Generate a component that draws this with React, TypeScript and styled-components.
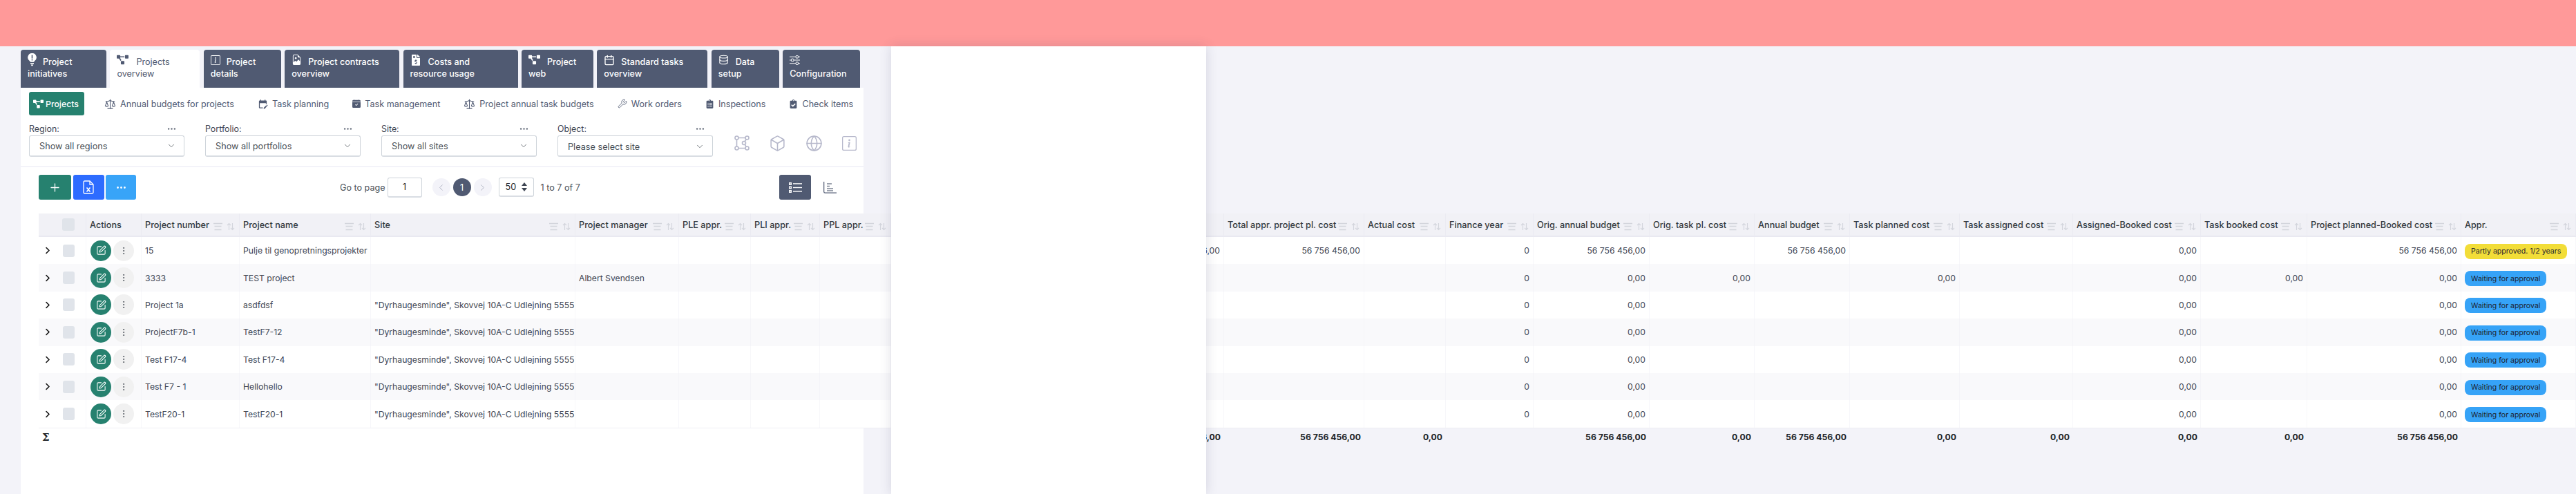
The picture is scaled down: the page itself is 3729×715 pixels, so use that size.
import styled, { createGlobalStyle } from "styled-components";
import { ReactNode } from "react";
import {
  Box,
  Calendar,
  ChevronDown,
  ChevronLeft,
  ChevronRight,
  Database,
  Ellipsis,
  EllipsisVertical,
  Globe,
  Plus,
  Scale,
  SquarePen,
  Wrench,
} from "lucide-react";
import { BsCalendarCheckFill, BsFileEarmarkImage, BsInfoSquare, BsSliders } from "react-icons/bs";
import { FaClipboardCheck, FaClipboardList, FaFileInvoiceDollar, FaProjectDiagram } from "react-icons/fa";
import { MdEditCalendar } from "react-icons/md";

const Bulb = () => (
  <svg width="13" height="19" viewBox="0 0 13 19">
    <path
      fill="currentColor"
      d="M6.5 0a6.2 6.2 0 0 0-3.6 11.3c.5.4.8.9.9 1.5h5.4c.1-.6.4-1.100.9-1.500A6.200 6.200 0 0 0 6.500 0zM4 14h5v1.400H4zM4.800 16.400h3.400l-.6 1.800H5.400z"
    />
    <rect x="5.700" y="2.600" width="1.600" height="5" fill="#505a72" />
    <rect x="5.700" y="8.800" width="1.600" height="1.700" fill="#505a72" />
  </svg>
);

const VectorSquare = () => (
  <svg width="22" height="22" viewBox="0 0 22 22" fill="none" stroke="currentColor" strokeWidth="1.6">
    <circle cx="3.500" cy="3.500" r="2.500" />
    <circle cx="18.500" cy="3.500" r="2.500" />
    <circle cx="3.500" cy="18.500" r="2.500" />
    <circle cx="18.500" cy="18.500" r="2.500" />
    <circle cx="14" cy="11" r="2.500" />
    <path d="M6 3.500h10M3.500 6v10M6 18.500h10M17.300 5.800l-2.300 3M15.200 13.200l2 3.200" />
  </svg>
);

const ExcelFile = () => (
  <svg width="16" height="20" viewBox="0 0 16 20" fill="none" stroke="#fff" strokeWidth="1.300">
    <path d="M2.500 1h7.500l5 5v11.500a1.500 1.500 0 0 1-1.500 1.500h-11A1.500 1.500 0 0 1 1 17.500v-15A1.500 1.500 0 0 1 2.500 1z" />
    <path d="M10 1v5h5" />
    <path d="M5.500 10.500l5 6M10.500 10.500l-5 6" strokeWidth="1.600" />
  </svg>
);

const ListView = () => (
  <svg width="19" height="15" viewBox="0 0 19 15">
    <g fill="#fff">
      <rect x="0" y="0" width="4" height="4" />
      <rect x="0" y="5.500" width="4" height="4" />
      <rect x="0" y="11" width="4" height="4" />
      <rect x="6" y="1.200" width="13" height="1.400" />
      <rect x="6" y="6.800" width="13" height="1.400" />
      <rect x="6" y="12.300" width="13" height="1.400" />
    </g>
    <g fill="#505a72">
      <rect x="1.400" y="1.400" width="1.200" height="1.200" />
      <rect x="1.400" y="6.900" width="1.200" height="1.200" />
      <rect x="1.400" y="12.400" width="1.200" height="1.200" />
    </g>
  </svg>
);

const ChartView = () => (
  <svg width="19" height="17" viewBox="0 0 19 17" fill="none">
    <path d="M.700 0v14.500c0 1 .6 1.600 1.600 1.600H19" stroke="#505a72" strokeWidth="1.200" />
    <path d="M5 3h7M5 6.500h4M5 10h9M5 13h9" stroke="#7c8494" strokeWidth="1.300" />
  </svg>
);

const SortIcons = () => (
  <svg width="31" height="12" viewBox="0 0 31 12" fill="none" stroke="#d3d5dc" strokeWidth="1.100">
    <path d="M0 1.500h13M1.500 5.500h10M1.500 10.500h10" strokeWidth="1.300" />
    <path d="M22.500 11V1.500M20 4l2.500-2.500L25 4M27.500 1v9.500M25 8l2.500 2.500L30 8" />
  </svg>
);

const SpinArrows = () => (
  <svg width="8" height="13" viewBox="0 0 8 13" fill="#3e4553">
    <path d="M4 0l4 5H0zM4 13L0 8h8z" />
  </svg>
);

type TabDef = { w: number; gap: number; icon: ReactNode; first: string; second: string; active?: boolean };

const tabs: TabDef[] = [
  { w: 124, gap: 9, icon: <Bulb />, first: "Project", second: "initiatives" },
  { w: 130, gap: 11, icon: <FaProjectDiagram size={17} />, first: "Projects", second: "overview", active: true },
  { w: 112, gap: 9, icon: <BsInfoSquare size={14} />, first: "Project", second: "details" },
  { w: 166, gap: 9, icon: <BsFileEarmarkImage size={15} />, first: "Project contracts", second: "overview" },
  { w: 166, gap: 10, icon: <FaFileInvoiceDollar size={16} />, first: "Costs and", second: "resource usage" },
  { w: 104, gap: 10, icon: <FaProjectDiagram size={17} />, first: "Project", second: "web" },
  { w: 160, gap: 9, icon: <Calendar size={16} strokeWidth={2} />, first: "Standard tasks", second: "overview" },
  { w: 98, gap: 10, icon: <Database size={15} strokeWidth={1.8} />, first: "Data", second: "setup" },
  { w: 112, gap: 0, icon: <BsSliders size={15} />, first: "", second: "Configuration" },
];

const subTabs: { icon: ReactNode; label: string }[] = [
  { icon: <Scale size={17} strokeWidth={1.5} />, label: "Annual budgets for projects" },
  { icon: <MdEditCalendar size={15} />, label: "Task planning" },
  { icon: <BsCalendarCheckFill size={12} />, label: "Task management" },
  { icon: <Scale size={17} strokeWidth={1.5} />, label: "Project annual task budgets" },
  { icon: <Wrench size={14} strokeWidth={1.5} />, label: "Work orders" },
  { icon: <FaClipboardList size={13} />, label: "Inspections" },
  { icon: <FaClipboardCheck size={13} />, label: "Check items" },
];

const filters = [
  { label: "Region:", value: "Show all regions" },
  { label: "Portfolio:", value: "Show all portfolios" },
  { label: "Site:", value: "Show all sites" },
  { label: "Object:", value: "Please select site", low: true },
];

type Col = { key: string; label: string; w: number; right?: boolean };

const columns: Col[] = [
  { key: "num", label: "Project number", w: 142 },
  { key: "name", label: "Project name", w: 190 },
  { key: "site", label: "Site", w: 296 },
  { key: "manager", label: "Project manager", w: 150 },
  { key: "ple", label: "PLE appr.", w: 104 },
  { key: "pli", label: "PLI appr.", w: 100 },
  { key: "ppl", label: "PPL appr.", w: 103 },
  { key: "hidden", label: "", w: 482, right: true },
  { key: "total", label: "Total appr. project pl. cost", w: 203, right: true },
  { key: "actual", label: "Actual cost", w: 118, right: true },
  { key: "year", label: "Finance year", w: 127, right: true },
  { key: "orig", label: "Orig. annual budget", w: 168, right: true },
  { key: "origTask", label: "Orig. task pl. cost", w: 152, right: true },
  { key: "annual", label: "Annual budget", w: 138, right: true },
  { key: "planned", label: "Task planned cost", w: 159, right: true },
  { key: "assigned", label: "Task assigned cost", w: 164, right: true },
  { key: "assBooked", label: "Assigned-Booked cost", w: 185, right: true },
  { key: "booked", label: "Task booked cost", w: 154, right: true },
  { key: "projBooked", label: "Project planned-Booked cost", w: 223, right: true },
  { key: "appr", label: "Appr.", w: 166 },
];

const BIG = "56 756 456,00";
const SITE = '"Dyrhaugesminde", Skovvej 10A-C Udlejning 5555';
const base = { year: "0", orig: "0,00", assBooked: "0,00", projBooked: "0,00", appr: "Waiting for approval" };

const rows: Record<string, string>[] = [
  { num: "15", name: "Pulje til genopretningsprojekter", hidden: BIG, total: BIG, year: "0", orig: BIG, annual: BIG, assBooked: "0,00", projBooked: BIG, appr: "Partly approved. 1/2 years" },
  { ...base, num: "3333", name: "TEST project", manager: "Albert Svendsen", origTask: "0,00", planned: "0,00", booked: "0,00" },
  { ...base, num: "Project 1a", name: "asdfdsf", site: SITE },
  { ...base, num: "ProjectF7b-1", name: "TestF7-12", site: SITE },
  { ...base, num: "Test F17-4", name: "Test F17-4", site: SITE },
  { ...base, num: "Test F7 - 1", name: "Hellohello", site: SITE },
  { ...base, num: "TestF20-1", name: "TestF20-1", site: SITE },
];

const totals: Record<string, string> = {
  hidden: BIG,
  total: BIG,
  actual: "0,00",
  orig: BIG,
  origTask: "0,00",
  annual: BIG,
  planned: "0,00",
  assigned: "0,00",
  assBooked: "0,00",
  booked: "0,00",
  projBooked: BIG,
};

export default function App() {
  return (
    <Page>
      <GlobalStyle />
      <Banner />

      <TabBar>
        {tabs.map((t) => (
          <Tab key={t.second + t.first} $w={t.w} $active={t.active}>
            <TabLine $gap={t.gap}>
              {t.icon}
              {t.first}
            </TabLine>
            <TabLine $gap={0}>{t.second}</TabLine>
          </Tab>
        ))}
      </TabBar>

      <Card>
        <SubTabs>
          <SubTabActive>
            <FaProjectDiagram size={15} />
            Projects
          </SubTabActive>
          {subTabs.map((s) => (
            <SubTab key={s.label}>
              {s.icon}
              {s.label}
            </SubTab>
          ))}
        </SubTabs>

        <Filters>
          {filters.map((f) => (
            <Filter key={f.label}>
              <FilterLabel>
                {f.label}
                <Ellipsis size={15} color="#6b7280" />
              </FilterLabel>
              <Select $low={f.low}>
                {f.value}
                <ChevronDown size={14} strokeWidth={1.3} color="#495057" />
              </Select>
            </Filter>
          ))}
          <FilterIcons>
            <VectorSquare />
            <Box size={25} strokeWidth={1.5} />
            <Globe size={25} strokeWidth={1.5} />
            <BsInfoSquare size={21} />
          </FilterIcons>
        </Filters>

        <Toolbar>
          <Actions>
            <ActionButton $w={47} $bg="#26816f">
              <Plus size={19} strokeWidth={1.6} />
            </ActionButton>
            <ActionButton $w={45} $bg="#2d6cff">
              <ExcelFile />
            </ActionButton>
            <ActionButton $w={44} $bg="#38a4f8">
              <Ellipsis size={17} />
            </ActionButton>
          </Actions>

          <Pager>
            <span>Go to page</span>
            <PageInput>1</PageInput>
            <PageCircle>
              <ChevronLeft size={15} strokeWidth={1.2} />
            </PageCircle>
            <PageCircle $active>1</PageCircle>
            <PageCircle>
              <ChevronRight size={15} strokeWidth={1.2} />
            </PageCircle>
            <PageSize>
              50
              <SpinArrows />
            </PageSize>
            <span>1 to 7 of 7</span>
          </Pager>

          <ViewToggle>
            <ToggleButton>
              <ListView />
            </ToggleButton>
            <ChartView />
          </ViewToggle>
        </Toolbar>

        <Table>
          <colgroup>
            <TableCol $w={69} />
            <TableCol $w={80} />
            {columns.map((c) => (
              <TableCol key={c.key} $w={c.w} />
            ))}
          </colgroup>
          <thead>
            <tr>
              <Th>
                <SelectCell>
                  <Checkbox />
                </SelectCell>
              </Th>
              <Th>Actions</Th>
              {columns.map((c) => (
                <Th key={c.key}>
                  <HeadCell>
                    {c.label}
                    <SortIcons />
                  </HeadCell>
                </Th>
              ))}
            </tr>
          </thead>
          <tbody>
            {rows.map((r, i) => (
              <Row key={r.num} $striped={i % 2 === 1}>
                <Td>
                  <SelectCell>
                    <ChevronRight size={17} strokeWidth={2.4} color="#111" />
                    <Checkbox />
                  </SelectCell>
                </Td>
                <Td>
                  <RowActions>
                    <RoundButton $green>
                      <SquarePen size={15} strokeWidth={1.7} />
                    </RoundButton>
                    <RoundButton>
                      <EllipsisVertical size={14} strokeWidth={1.6} />
                    </RoundButton>
                  </RowActions>
                </Td>
                {columns.map((c) => (
                  <Td key={c.key} $right={c.right}>
                    {c.key === "appr" ? <Badge $partly={i === 0}>{r.appr}</Badge> : r[c.key]}
                  </Td>
                ))}
              </Row>
            ))}
          </tbody>
          <tfoot>
            <tr>
              <FootTd>
                <Sigma>Σ</Sigma>
              </FootTd>
              <FootTd />
              {columns.map((c) => (
                <FootTd key={c.key} $right>
                  {totals[c.key]}
                </FootTd>
              ))}
            </tr>
          </tfoot>
        </Table>
      </Card>

      <Drawer />
    </Page>
  );
}

const GlobalStyle = createGlobalStyle`
  html, body {
    margin: 0;
    padding: 0;
    background: #f3f3f9;
  }
  body {
    font-family: Inter, "Liberation Sans", sans-serif;
    overflow: hidden;
  }
`;

const Page = styled.div`
  position: relative;
  width: 3729px;
  height: 715px;
  overflow: hidden;
  background: #f3f3f9;
`;

const Banner = styled.div`
  height: 67px;
  background: #ff9999;
`;

const TabBar = styled.div`
  display: flex;
  gap: 5.4px;
  height: 55px;
  margin: 5px 0 0 30px;
`;

const Tab = styled.div<{ $w: number; $active?: boolean }>`
  box-sizing: border-box;
  width: ${(p) => p.$w}px;
  padding: 9px 10px 0;
  border-radius: 4px 4px 0 0;
  background: ${(p) => (p.$active ? "#fff" : "#505a72")};
  color: ${(p) => (p.$active ? "#505a72" : "#fff")};
  font-size: 12.6px;
  font-weight: ${(p) => (p.$active ? 400 : 500)};
`;

const TabLine = styled.div<{ $gap: number }>`
  display: flex;
  align-items: center;
  gap: ${(p) => p.$gap}px;
  height: 17px;
  white-space: nowrap;

  svg {
    margin-top: -6px;
    flex: none;
  }
`;

const Card = styled.div`
  width: 1220px;
  height: 588px;
  margin-left: 30px;
  background: #fff;
`;

const SubTabs = styled.div`
  display: flex;
  align-items: center;
  gap: 34px;
  height: 34px;
  padding: 6px 0 0 12px;
`;

const SubTabActive = styled.div`
  display: flex;
  align-items: center;
  gap: 3px;
  box-sizing: border-box;
  width: 80px;
  height: 34px;
  margin-right: -5px;
  padding-left: 6px;
  border-radius: 3px;
  background: #26816f;
  color: #fff;
  font-size: 12.3px;
  font-weight: 500;
`;

const SubTab = styled.div`
  display: flex;
  align-items: center;
  gap: 6px;
  color: #505a72;
  font-size: 12.6px;
  white-space: nowrap;
`;

const Filters = styled.div`
  display: flex;
  gap: 30px;
  padding: 10px 0 0 12px;
  height: 63px;
  box-sizing: content-box;
  border-bottom: 2px solid #f3f3f9;
`;

const Filter = styled.div`
  width: 225px;
`;

const FilterLabel = styled.div`
  display: flex;
  align-items: center;
  justify-content: space-between;
  height: 19px;
  padding-right: 11px;
  color: #3e4553;
  font-size: 12.4px;
`;

const Select = styled.div<{ $low?: boolean }>`
  display: flex;
  align-items: center;
  justify-content: space-between;
  box-sizing: border-box;
  height: 31px;
  padding: ${(p) => (p.$low ? "2px" : "0")} 11px 0 14px;
  border: 1px solid #ced4da;
  border-bottom: 2px solid #d9dde3;
  border-radius: 3px;
  color: #495057;
  font-size: 12.7px;
`;

const FilterIcons = styled.div`
  display: flex;
  align-items: center;
  gap: 28px;
  height: 26px;
  margin: 17px 0 0 1px;
  color: #b6b8cb;
`;

const Toolbar = styled.div`
  display: flex;
  align-items: center;
  height: 36px;
  padding: 11px 39px 0 26px;
`;

const Actions = styled.div`
  display: flex;
  gap: 2.500px;
`;

const ActionButton = styled.div<{ $w: number; $bg: string }>`
  display: flex;
  align-items: center;
  justify-content: center;
  width: ${(p) => p.$w}px;
  height: 36px;
  border-radius: 3px;
  background: ${(p) => p.$bg};
  color: #fff;
`;

const Pager = styled.div`
  display: flex;
  align-items: center;
  margin-left: 295px;
  color: #495057;
  font-size: 12.6px;
`;

const PageInput = styled.div`
  display: flex;
  align-items: center;
  justify-content: center;
  box-sizing: border-box;
  width: 50px;
  height: 29px;
  margin: 0 15px 0 3px;
  border: 1px solid #ced4da;
  border-bottom: 2px solid #d9dde3;
  border-radius: 3px;
  color: #212529;
`;

const PageCircle = styled.div<{ $active?: boolean }>`
  display: flex;
  align-items: center;
  justify-content: center;
  width: 26px;
  height: 26px;
  margin-right: 4px;
  border-radius: 50%;
  background: ${(p) => (p.$active ? "#505a72" : "#f3f3f9")};
  color: ${(p) => (p.$active ? "#fff" : "#9a9fb0")};
`;

const PageSize = styled.div`
  display: flex;
  align-items: center;
  justify-content: space-between;
  box-sizing: border-box;
  width: 51px;
  height: 28px;
  margin: 0 10px 0 6px;
  padding: 0 9px;
  border: 1px solid #ced4da;
  border-bottom: 2px solid #d9dde3;
  border-radius: 3px;
  color: #212529;
`;

const ViewToggle = styled.div`
  display: flex;
  align-items: center;
  gap: 18px;
  margin-left: auto;
`;

const ToggleButton = styled.div`
  display: flex;
  align-items: center;
  justify-content: center;
  width: 46px;
  height: 36px;
  border-radius: 3px;
  background: #505a72;
`;

const Table = styled.table`
  table-layout: fixed;
  width: 3673px;
  margin: 20px 0 0 26px;
  border-collapse: separate;
  border-spacing: 0;
  font-size: 12.2px;
  color: #3e4553;
`;

const TableCol = styled.col<{ $w: number }>`
  width: ${(p) => p.$w}px;
`;

const Th = styled.th`
  box-sizing: border-box;
  height: 34px;
  padding: 0 5px;
  border-right: 1px solid #ebebf2;
  border-bottom: 2px solid #e9e9f1;
  background: #f1f1f6;
  color: #343a40;
  font-weight: 500;
  font-size: 12.7px;
  text-align: left;
  white-space: nowrap;
`;

const HeadCell = styled.div`
  display: flex;
  align-items: center;
  justify-content: space-between;
  padding-right: 1px;

  svg {
    margin-top: 5px;
    flex: none;
  }
`;

const Row = styled.tr<{ $striped: boolean }>`
  background: ${(p) => (p.$striped ? "#f9f9fb" : "#fff")};
`;

const Td = styled.td<{ $right?: boolean }>`
  box-sizing: border-box;
  height: 39.4px;
  padding: 0 5px;
  border-right: 1px solid rgba(240, 240, 246, 0.5);
  text-align: ${(p) => (p.$right ? "right" : "left")};
  white-space: nowrap;
`;

const SelectCell = styled.div`
  display: flex;
  align-items: center;
  justify-content: flex-end;
  gap: 14px;
  padding-right: 11px;
`;

const Checkbox = styled.div`
  width: 18px;
  height: 18px;
  border-radius: 3px;
  background: #e0e4ea;
`;

const RowActions = styled.div`
  display: flex;
  gap: 3px;
  margin-left: 1px;
`;

const RoundButton = styled.div<{ $green?: boolean }>`
  display: flex;
  align-items: center;
  justify-content: center;
  width: 30px;
  height: 30px;
  border-radius: 50%;
  background: ${(p) => (p.$green ? "#26816f" : "#f1f1f1")};
  color: ${(p) => (p.$green ? "#fff" : "#495057")};
`;

const Badge = styled.span<{ $partly?: boolean }>`
  display: inline-flex;
  align-items: center;
  box-sizing: border-box;
  height: 22px;
  margin-top: 2px;
  padding: 0 9px;
  border-radius: 8px;
  background: ${(p) => (p.$partly ? "#f2dd38" : "#36a3f7")};
  color: #1d2330;
  font-size: 10.6px;
`;

const FootTd = styled.td<{ $right?: boolean }>`
  box-sizing: border-box;
  height: 27px;
  padding: 0 5px;
  border-top: 1px solid #eeeef4;
  color: #212529;
  font-weight: 700;
  text-align: ${(p) => (p.$right ? "right" : "left")};
  white-space: nowrap;
`;

const Sigma = styled.span`
  font-family: "DejaVu Serif", serif;
  font-size: 15px;
`;

const Drawer = styled.div`
  position: absolute;
  top: 67px;
  left: 1290px;
  bottom: 0;
  width: 456px;
  background: #fff;
  box-shadow: 0 0 16px rgba(50, 50, 90, 0.16);
`;
